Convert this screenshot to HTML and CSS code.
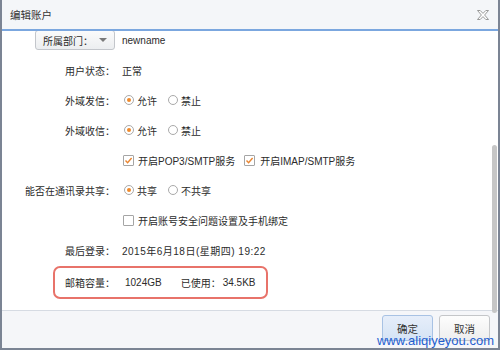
FILE: index.html
```html
<!DOCTYPE html>
<html lang="zh-CN">
<head>
<meta charset="utf-8">
<title>编辑账户</title>
<link rel="stylesheet" href="styles.css">
</head>
<body>
<div class="dialog">
  <div class="header">
    <span class="title">编辑账户</span>
    <svg class="close" width="12" height="10" viewBox="0 0 12 10"><polygon points="0.5,0.5 3.2,0.5 6,3.4 8.8,0.5 11.5,0.5 7.6,5 11.5,9.5 8.8,9.5 6,6.6 3.2,9.5 0.5,9.5 4.4,5" fill="#fff" stroke="#8e8e8e" stroke-width="0.9"/></svg>
  </div>
  <div class="content">
    <div class="rows">
      <div class="row">
        <div class="label"><span class="select">所属部门：<i class="arrow"></i></span></div>
        <div class="value">newname</div>
      </div>
      <div class="row">
        <div class="label">用户状态：</div>
        <div class="value">正常</div>
      </div>
      <div class="row">
        <div class="label">外域发信：</div>
        <div class="value"><span class="radio on"></span>允许<span class="radio second"></span>禁止</div>
      </div>
      <div class="row">
        <div class="label">外域收信：</div>
        <div class="value"><span class="radio on"></span>允许<span class="radio second"></span>禁止</div>
      </div>
      <div class="row">
        <div class="label"></div>
        <div class="value"><span class="check on"><svg width="9" height="9" viewBox="0 0 9 9"><path d="M1.5 4.6 L3.6 6.8 L7.6 2" fill="none" stroke="#ea8530" stroke-width="1.4"/></svg></span>开启POP3/SMTP服务<span class="check on second"><svg width="9" height="9" viewBox="0 0 9 9"><path d="M1.5 4.6 L3.6 6.8 L7.6 2" fill="none" stroke="#ea8530" stroke-width="1.4"/></svg></span>开启IMAP/SMTP服务</div>
      </div>
      <div class="row">
        <div class="label">能否在通讯录共享：</div>
        <div class="value"><span class="radio on"></span>共享<span class="radio second"></span>不共享</div>
      </div>
      <div class="row">
        <div class="label"></div>
        <div class="value"><span class="check"></span>开启账号安全问题设置及手机绑定</div>
      </div>
      <div class="row">
        <div class="label">最后登录：</div>
        <div class="value date">2015年6月18日(星期四) 19:22</div>
      </div>
      <div class="quota">
        <span class="q-label">邮箱容量：</span>
        <span class="q-total">1024GB</span>
        <span class="q-used-label">已使用：</span>
        <span class="q-used">34.5KB</span>
      </div>
    </div>
  </div>
  <div class="footer">
    <button class="btn primary">确定</button>
    <button class="btn">取消</button>
  </div>
  <div class="scroll-thumb"></div>
  <div class="watermark">www.aliqiyeyou.com</div>
</div>
</body>
</html>
```
FILE: styles.css
```css
html, body {
  margin: 0;
  padding: 0;
  background: #fff;
}
body {
  width: 500px;
  height: 350px;
  overflow: hidden;
  font-family: "Liberation Sans", "Noto Sans CJK SC", sans-serif;
  font-size: 10px;
  color: #2b2b2b;
}
.dialog {
  position: relative;
  width: 500px;
  height: 350px;
  box-sizing: border-box;
  border-left: 2px solid #7b8494;
  border-right: 2px solid #7b8494;
  border-bottom: 2px solid #7b8494;
  display: flex;
  flex-direction: column;
  background: #fff;
}
.header {
  height: 29px;
  flex: none;
  background: #f4f6f9;
  border-bottom: 2px solid #7ba7df;
  display: flex;
  align-items: center;
  justify-content: space-between;
  padding: 0 9px 0 8px;
}
.title {
  font-size: 10.5px;
  color: #333;
}
.close {
  display: block;
  margin-top: 1px;
}
.content {
  flex: 1;
  overflow: hidden;
}
.rows {
  margin-top: -6px;
}
.row {
  display: grid;
  grid-template-columns: 113px 1fr;
  column-gap: 7px;
  height: 30px;
  align-items: center;
}
.label {
  text-align: right;
  white-space: nowrap;
}
.value {
  display: flex;
  align-items: center;
  white-space: nowrap;
}
.date {
  letter-spacing: 0.5px;
}
.select {
  display: inline-flex;
  align-items: center;
  box-sizing: border-box;
  width: 80px;
  height: 20px;
  padding-left: 7px;
  border: 1px solid #c3c6cb;
  border-radius: 3px;
  background: linear-gradient(#fbfbfb, #eceef0);
}
.arrow {
  margin-left: 6px;
  width: 0;
  height: 0;
  border-left: 4px solid transparent;
  border-right: 4px solid transparent;
  border-top: 4px solid #7a7a7a;
}
.radio {
  box-sizing: border-box;
  width: 10px;
  height: 10px;
  border: 1px solid #a9a9a9;
  border-radius: 50%;
  background: #fff;
  margin: 0 3px 0 2px;
  display: inline-flex;
  align-items: center;
  justify-content: center;
}
.radio.second {
  margin-left: 11px;
}
.radio.on::after {
  content: "";
  width: 4px;
  height: 4px;
  border-radius: 50%;
  background: #ef8a2b;
}
.check {
  box-sizing: border-box;
  width: 11px;
  height: 11px;
  border: 1px solid #a5a5a5;
  border-radius: 1px;
  background: #fff;
  margin: 0 4px 0 1px;
  display: inline-flex;
  align-items: center;
  justify-content: center;
}
.check.second {
  margin-left: 9px;
  margin-right: 5px;
}
.check svg {
  display: block;
}
.quota {
  margin: 1px 0 0 51px;
  width: 215px;
  height: 33px;
  box-sizing: border-box;
  border: 2px solid #e8736a;
  border-radius: 7px;
  display: flex;
  align-items: center;
  padding-left: 10px;
  white-space: nowrap;
}
.q-total {
  margin-left: 10px;
}
.q-used-label {
  margin-left: 19px;
}
.q-used {
  margin-left: 2px;
}
.footer {
  flex: none;
  height: 33px;
  border-top: 1px solid #d6dbe3;
  background: #f5f6f9;
  display: flex;
  justify-content: flex-end;
  align-items: flex-start;
  gap: 6px;
  padding: 4px 8px 0 0;
}
.btn {
  width: 51px;
  height: 26px;
  border: 1px solid #c4c6c9;
  border-radius: 3px;
  background: linear-gradient(#fdfdfd, #eeeeee);
  font-family: "Liberation Sans", "Noto Sans CJK SC", sans-serif;
  font-size: 10.5px;
  color: #333;
  padding: 0;
}
.btn.primary {
  border-color: #a8c2e4;
  background: linear-gradient(#e6eefa, #d5e3f5);
}
.scroll-thumb {
  position: absolute;
  right: 1px;
  top: 145px;
  width: 5px;
  height: 168px;
  border-radius: 3px;
  background: #c6c6c6;
}
.watermark {
  position: absolute;
  right: 4px;
  bottom: 0;
  font-family: "Liberation Sans", sans-serif;
  font-size: 13px;
  line-height: 15px;
  color: #1f5fcf;
}
```
